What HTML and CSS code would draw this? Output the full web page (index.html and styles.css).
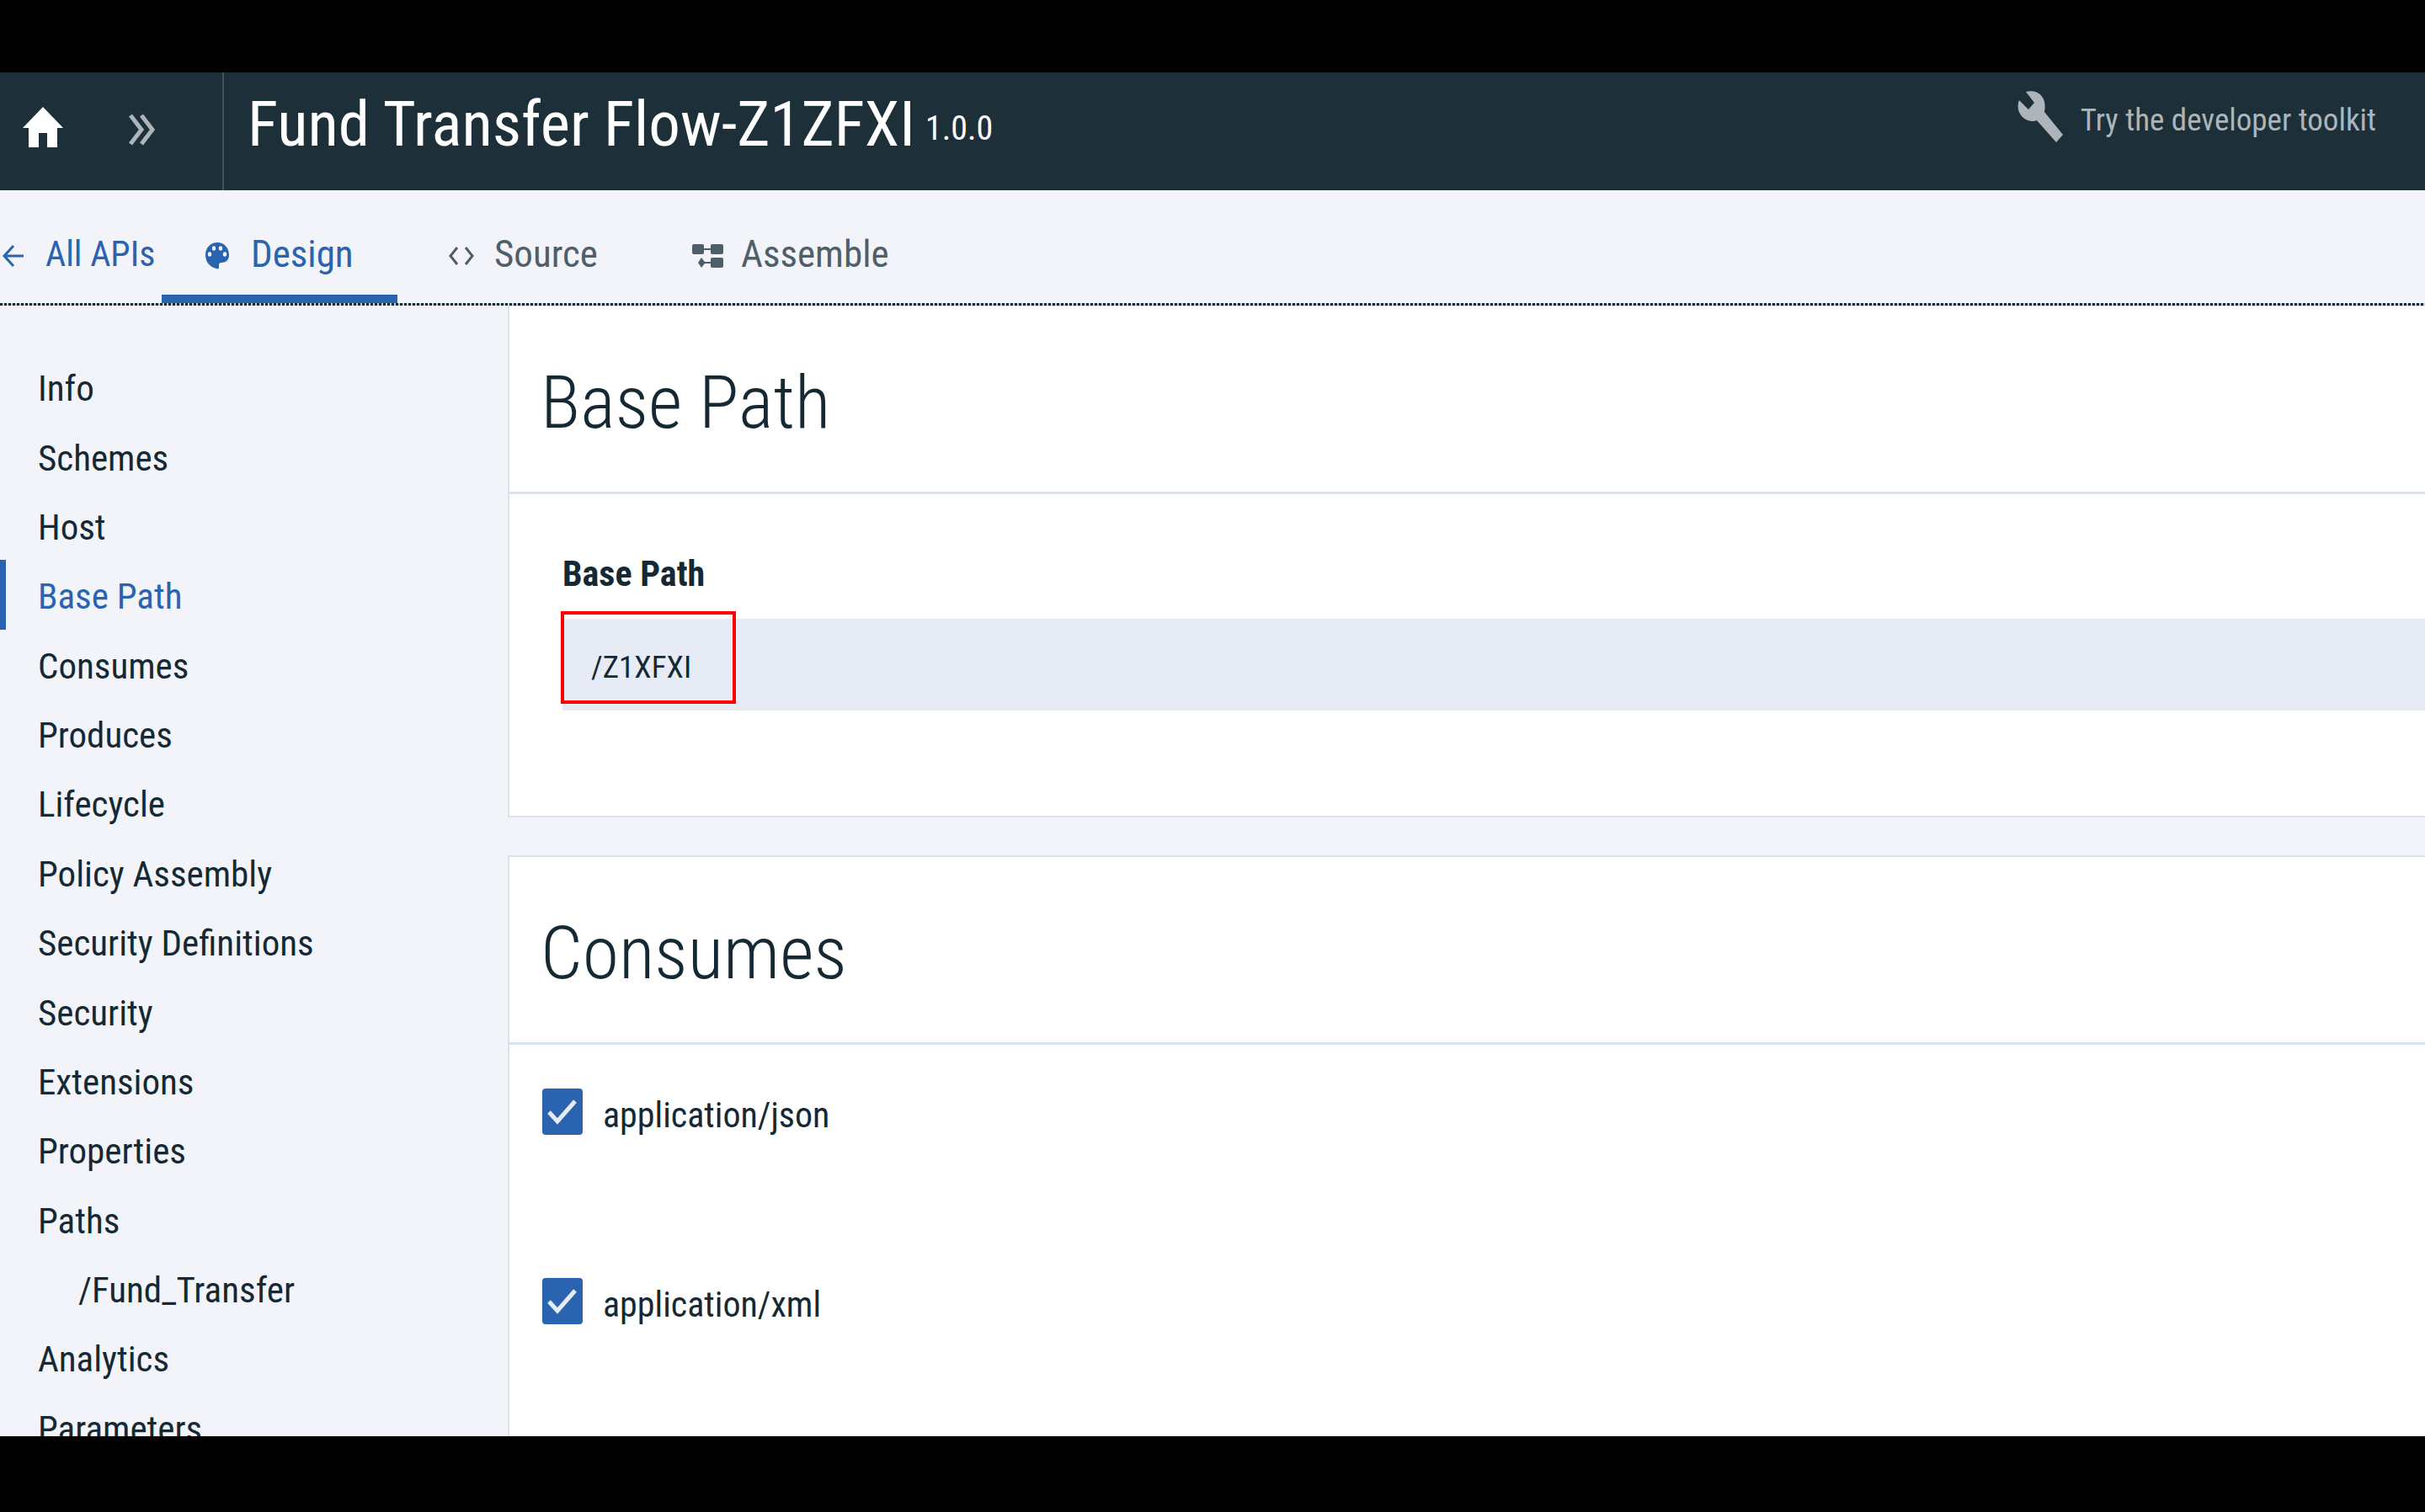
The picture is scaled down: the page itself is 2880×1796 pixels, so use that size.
FILE: index.html
```html
<!DOCTYPE html>
<html lang="en">
<head>
<meta charset="utf-8">
<title>Fund Transfer Flow-Z1ZFXI</title>
<link rel="stylesheet" href="styles.css">
</head>
<body>
<div class="app">
  <header class="topbar">
    <div class="topbar-nav">
      <a class="home" href="#" aria-label="Home">
        <svg width="48" height="48" viewBox="0 0 48 48" fill="currentColor"><path d="M24 0L48 25H41V48H29V31H19V48H7V25H0Z"/></svg>
      </a>
      <button class="expand" type="button" aria-label="Expand navigation">
        <svg width="32" height="38" viewBox="0 0 32 38" fill="none" stroke="currentColor" stroke-width="5"><path d="M2 2L15 19L2 36M15 2L28 19L15 36"/></svg>
      </button>
    </div>
    <h1 class="title">Fund Transfer Flow-Z1ZFXI</h1>
    <span class="version">1.0.0</span>
    <a class="toolkit" href="#">
      <svg width="55" height="61" viewBox="0 0 55 61" fill="currentColor"><path d="M10 1C18-1 26 1 30 8C33 13 33 19 32 25L54 52L46 61L23 35C15 38 7 34 3 27C0 22 0 16 2 11L13 22L20 14Z"/></svg>
      <span>Try the developer toolkit</span>
    </a>
  </header>

  <nav class="tabs" aria-label="Views">
    <a class="tab tab-back" href="#">
      <svg width="25" height="28" viewBox="0 0 25 28" fill="none" stroke="currentColor" stroke-width="3"><path d="M25 14H2M13 2L2 14L13 26"/></svg>
      <span>All APIs</span>
    </a>
    <a class="tab tab-design" href="#" aria-current="page">
      <svg width="28" height="32" viewBox="0 0 28 32"><path fill="currentColor" d="M14 0C22 0 28 6 28 15C28 21 24 24 19 24C16 24 16 26 16 28C16 31 16 32 13 31C5 29 0 23 0 15C0 6 6 0 14 0Z"/><g fill="#f2f4f9"><ellipse cx="5" cy="14" rx="2.2" ry="2.7"/><ellipse cx="10" cy="7" rx="2.2" ry="2.7"/><ellipse cx="18" cy="7" rx="2.2" ry="2.7"/><ellipse cx="23" cy="14" rx="2.2" ry="2.7"/></g></svg>
      <span>Design</span>
    </a>
    <a class="tab tab-source" href="#">
      <svg width="30" height="22" viewBox="0 0 30 22" fill="none" stroke="currentColor" stroke-width="3"><path d="M10 1L2 11L10 21M20 1L28 11L20 21"/></svg>
      <span>Source</span>
    </a>
    <a class="tab tab-assemble" href="#">
      <svg width="37" height="28" viewBox="0 0 37 28" fill="currentColor"><rect width="14" height="12" rx="2"/><rect x="22" width="15" height="12" rx="2"/><rect x="13" y="5" width="10" height="2"/><rect x="22" y="16" width="15" height="12" rx="2"/><path d="M11 16L15 21H22V23H15L11 28L7 22Z"/></svg>
      <span>Assemble</span>
    </a>
  </nav>

  <div class="workspace">
    <nav class="sidebar" aria-label="Sections">
      <ul>
        <li><a href="#">Info</a></li>
        <li><a href="#">Schemes</a></li>
        <li><a href="#">Host</a></li>
        <li><a class="active" href="#">Base Path</a></li>
        <li><a href="#">Consumes</a></li>
        <li><a href="#">Produces</a></li>
        <li><a href="#">Lifecycle</a></li>
        <li><a href="#">Policy Assembly</a></li>
        <li><a href="#">Security Definitions</a></li>
        <li><a href="#">Security</a></li>
        <li><a href="#">Extensions</a></li>
        <li><a href="#">Properties</a></li>
        <li><a href="#">Paths</a></li>
        <li><a class="child" href="#">/Fund_Transfer</a></li>
        <li><a href="#">Analytics</a></li>
        <li><a href="#">Parameters</a></li>
      </ul>
    </nav>

    <main class="panels">
      <section class="card">
        <h2>Base Path</h2>
        <div class="field">
          <label for="base-path">Base Path</label>
          <div class="input-wrap">
            <input id="base-path" type="text" value="/Z1XFXI">
            <span class="highlight"></span>
          </div>
        </div>
      </section>
      <section class="card">
        <h2>Consumes</h2>
        <div class="options">
          <label class="option"><input type="checkbox" checked><span>application/json</span></label>
          <label class="option"><input type="checkbox" checked><span>application/xml</span></label>
        </div>
      </section>
    </main>
  </div>
</div>
</body>
</html>
```

FILE: styles.css
```css
:root {
  --ink: #152934;
  --blue: #2a63b0;
  --page: #f2f4f9;
  --line: #dbe3ea;
  --muted: #4f5f69;
}

* {
  box-sizing: border-box;
}

body {
  margin: 0;
  height: 100vh;
  padding: 86px 0 90px;
  background: #000;
  color: var(--ink);
  font-family: "Roboto Condensed", Roboto, "Liberation Sans", sans-serif;
  font-size: 43px;
}

a {
  color: inherit;
  text-decoration: none;
}

svg {
  display: block;
  flex: none;
}

.app {
  height: 100%;
  display: flex;
  flex-direction: column;
  overflow: hidden;
  background: var(--page);
}

/* Top bar */
.topbar {
  flex: none;
  display: flex;
  align-items: flex-start;
  height: 140px;
  background: #1d3039;
  color: #fff;
}

.topbar-nav {
  align-self: stretch;
  display: flex;
  align-items: center;
  gap: 78px;
  width: 266px;
  padding: 0 0 10px 27px;
  border-right: 2px solid #43535b;
}

.home {
  color: #fff;
}

.expand {
  padding: 6px 0 0;
  border: 0;
  background: none;
  color: #adb5bb;
}

.title {
  margin: 0 0 0 28px;
  font-size: 75px;
  font-weight: 400;
  line-height: 122px;
}

.version {
  margin-left: 12px;
  font-size: 40px;
  line-height: 134px;
}

.toolkit {
  display: flex;
  align-items: center;
  gap: 20px;
  margin: 22px 58px 0 auto;
  font-size: 37px;
  color: #adb5bb;
}

.toolkit span {
  padding-top: 8px;
}

/* Tabs */
.tabs {
  flex: none;
  display: flex;
  height: 137px;
  color: var(--muted);
  background: repeating-linear-gradient(90deg, var(--ink) 0 3px, #c9d2d9 3px 5px) bottom / 100% 3px no-repeat;
  padding-bottom: 3px;
  font-size: 45px;
  white-space: nowrap;
}

.tab {
  display: flex;
  align-items: center;
  padding: 32px 0 0;
  border-bottom: 10px solid transparent;
}

.tab span {
  padding-bottom: 6px;
}

.tab-back {
  width: 192px;
  gap: 26px;
  padding-left: 3px;
  font-size: 42px;
  color: var(--blue);
}

.tab-design {
  width: 280px;
  gap: 26px;
  padding-left: 52px;
  color: var(--blue);
  border-bottom-color: var(--blue);
}

.tab-source {
  width: 350px;
  gap: 24px;
  padding-left: 61px;
}

.tab-assemble {
  gap: 21px;
}

/* Body */
.workspace {
  flex: 1;
  min-height: 0;
  display: flex;
}

.sidebar {
  flex: none;
  width: 603px;
  padding-top: 55px;
}

.sidebar ul {
  display: grid;
  grid-auto-rows: 1fr;
  height: 1318px;
  margin: 0;
  padding: 0;
  list-style: none;
}

.sidebar a {
  display: flex;
  align-items: center;
  height: 100%;
  padding: 4px 0 0 38px;
  border-left: 7px solid transparent;
}

.sidebar .active {
  color: var(--blue);
  border-left-color: var(--blue);
}

.sidebar .child {
  padding-left: 86px;
}

.panels {
  flex: 1;
  min-width: 0;
  display: flex;
  flex-direction: column;
  gap: 45px;
}

.card {
  flex: none;
  border: 2px solid var(--line);
  border-right: 0;
  background: #fff;
}

.card:first-child {
  border-top-width: 1px;
}

.card h2 {
  margin: 0;
  padding: 54px 0 46px 37px;
  border-bottom: 3px solid var(--line);
  font-size: 88px;
  font-weight: 300;
  line-height: 120px;
}

.field {
  display: flex;
  flex-direction: column;
  gap: 31px;
  padding: 72px 0 125px 63px;
}

.field label {
  font-size: 42px;
  font-weight: 700;
  line-height: 45px;
}

.input-wrap {
  position: relative;
}

.input-wrap input {
  display: block;
  width: 100%;
  height: 109px;
  padding: 6px 0 0 34px;
  border: 0;
  background: #e6ebf5;
  color: inherit;
  font: inherit;
  font-size: 37px;
}

.highlight {
  position: absolute;
  left: -2px;
  top: -9px;
  width: 208px;
  height: 110px;
  border: 4px solid #f00;
  pointer-events: none;
}

.options {
  display: flex;
  flex-direction: column;
  gap: 170px;
  padding: 52px 0 170px 39px;
}

.option {
  display: flex;
  align-items: center;
  gap: 24px;
  height: 55px;
  font-size: 42px;
}

.option span {
  padding-top: 8px;
}

.option input {
  flex: none;
  appearance: none;
  width: 48px;
  height: 55px;
  margin: 0;
  border-radius: 4px;
  background: var(--blue) url("data:image/svg+xml,%3Csvg xmlns='http://www.w3.org/2000/svg' viewBox='0 0 48 55'%3E%3Cpath d='M8 28L18 39L39 15' fill='none' stroke='%23e6ebf5' stroke-width='5'/%3E%3C/svg%3E") center / 100% 100%;
}
```
